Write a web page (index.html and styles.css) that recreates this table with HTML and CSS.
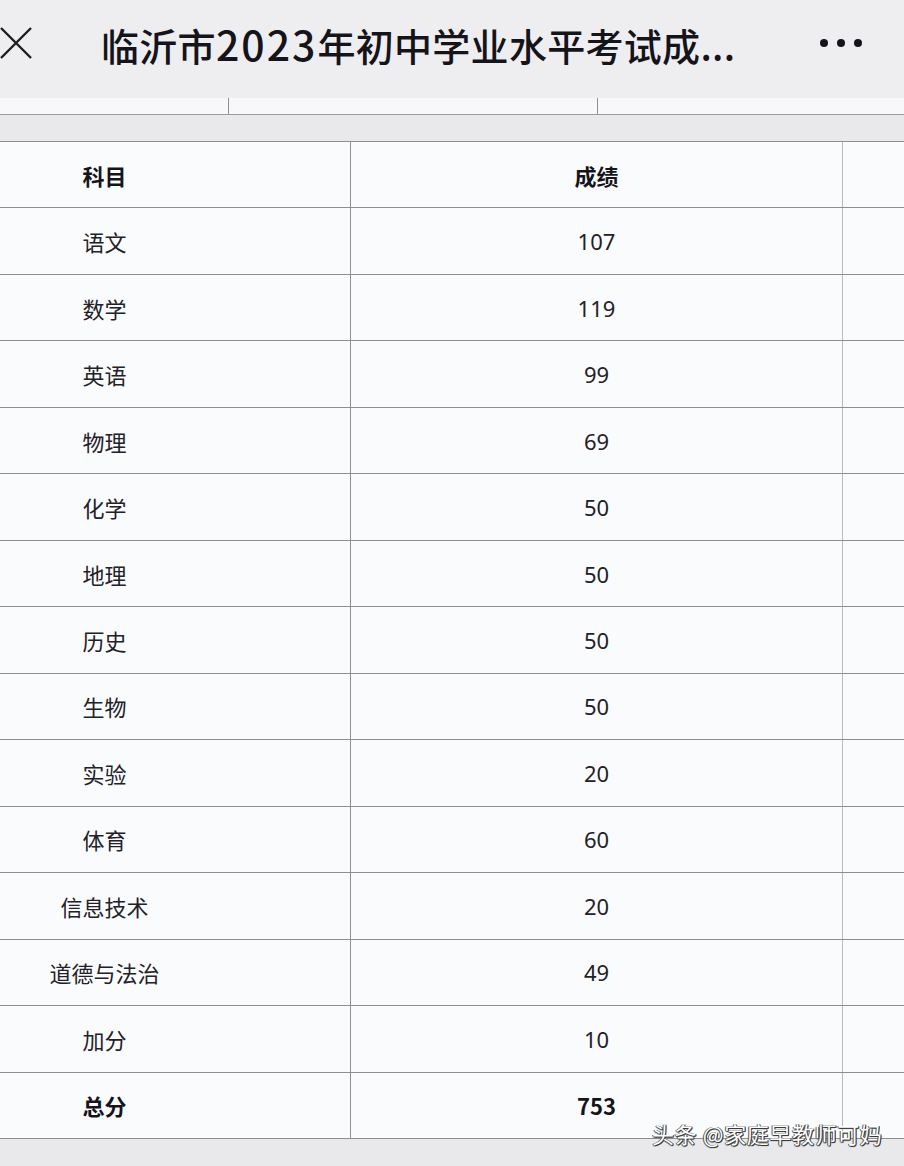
FILE: index.html
```html
<!DOCTYPE html>
<html lang="zh-CN">
<head>
<meta charset="utf-8">
<title>临沂市2023年初中学业水平考试成绩</title>
<link rel="stylesheet" href="styles.css">
</head>
<body>
<div class="page">
  <header class="topbar">
    <svg class="close" width="34" height="34" viewBox="0 0 34 34" aria-hidden="true">
      <path d="M1 2 L31 32 M31 2 L1 32" stroke="#1c1c22" stroke-width="2.4" fill="none"/>
    </svg>
    <h1 class="title">临沂市<span class="num">2023</span>年初中学业水平考试成...</h1>
    <div class="more" aria-label="更多"><i></i><i></i><i></i></div>
  </header>
  <div class="strip">
    <div class="s1"></div><div class="s2"></div><div class="s3"></div>
  </div>
  <div class="gap"></div>
  <div class="table">
    <div class="row head"><div class="c1">科目</div><div class="c2">成绩</div><div class="c3"></div></div>
    <div class="row"><div class="c1">语文</div><div class="c2">107</div><div class="c3"></div></div>
    <div class="row"><div class="c1">数学</div><div class="c2">119</div><div class="c3"></div></div>
    <div class="row"><div class="c1">英语</div><div class="c2">99</div><div class="c3"></div></div>
    <div class="row"><div class="c1">物理</div><div class="c2">69</div><div class="c3"></div></div>
    <div class="row"><div class="c1">化学</div><div class="c2">50</div><div class="c3"></div></div>
    <div class="row"><div class="c1">地理</div><div class="c2">50</div><div class="c3"></div></div>
    <div class="row"><div class="c1">历史</div><div class="c2">50</div><div class="c3"></div></div>
    <div class="row"><div class="c1">生物</div><div class="c2">50</div><div class="c3"></div></div>
    <div class="row"><div class="c1">实验</div><div class="c2">20</div><div class="c3"></div></div>
    <div class="row"><div class="c1">体育</div><div class="c2">60</div><div class="c3"></div></div>
    <div class="row"><div class="c1">信息技术</div><div class="c2">20</div><div class="c3"></div></div>
    <div class="row"><div class="c1">道德与法治</div><div class="c2">49</div><div class="c3"></div></div>
    <div class="row"><div class="c1">加分</div><div class="c2">10</div><div class="c3"></div></div>
    <div class="row head"><div class="c1">总分</div><div class="c2">753</div><div class="c3"></div></div>
  </div>
  <div class="watermark">头条 @家庭早教师可妈</div>
</div>
</body>
</html>
```
FILE: styles.css
```css
html, body {
  margin: 0;
  padding: 0;
  background: #e9e9eb;
}
body {
  font-family: "Noto Sans CJK SC", "Noto Sans", sans-serif;
  color: #1c1b22;
}
.page {
  position: relative;
  width: 904px;
  height: 1166px;
  overflow: hidden;
}
.topbar {
  height: 98px;
  background: #eeeef0;
  display: flex;
  align-items: center;
}
.close {
  flex: none;
  margin-left: 0;
  margin-top: -12px;
}
.title {
  margin: 0 0 0 67px;
  font-size: 38px;
  font-weight: 500;
  line-height: 1;
  letter-spacing: 0.3px;
  margin-top: -12px;
  white-space: nowrap;
  flex: none;
  color: #15141a;
}
.title .num {
  letter-spacing: 2px;
  font-size: 41px;
}
.more {
  margin-left: auto;
  margin-right: 42px;
  margin-top: -12px;
  display: flex;
  gap: 9px;
}
.more i {
  display: block;
  width: 8px;
  height: 8px;
  border-radius: 50%;
  background: #15141a;
}
.strip {
  height: 16px;
  background: #f8f8fa;
  border-bottom: 1px solid #9b9ba0;
  display: flex;
}
.strip .s1 { width: 228px; }
.strip .s2 { width: 368px; border-left: 1px solid #8e8e93; }
.strip .s3 { flex: 1; border-left: 1px solid #8e8e93; }
.gap {
  height: 26px;
}
.table {
  background: #fafbfd;
  border-top: 1px solid #8e8e93;
  width: 940px;
}
.row {
  display: grid;
  grid-template-columns: 351px 492px 1fr;
  height: 66.47px;
  box-sizing: border-box;
  border-bottom: 1px solid #8e8e93;
  font-size: 22px;
  color: #222127;
}
.row > div {
  display: flex;
  align-items: center;
  justify-content: center;
}
.row .c1 {
  padding-right: 141px;
  border-right: 1px solid #8e8e93;
}
.row .c2 {
  border-right: 1px solid #b8b8bd;
  font-family: "Noto Sans", "Noto Sans CJK SC", sans-serif;
}
.row.head {
  font-weight: 700;
  color: #15141a;
}
.row.head .c2 {
  font-family: "Noto Sans CJK SC", sans-serif;
}
.watermark {
  position: absolute;
  left: 652px;
  top: 1118px;
  font-size: 22px;
  line-height: 30px;
  color: #ffffff;
  letter-spacing: 0.6px;
  text-shadow: 1px 1px 0 #3a3a3a, -1px 0 0 #555, 0 1px 1px #333, 1px 0 0 #444;
  white-space: nowrap;
}
```
